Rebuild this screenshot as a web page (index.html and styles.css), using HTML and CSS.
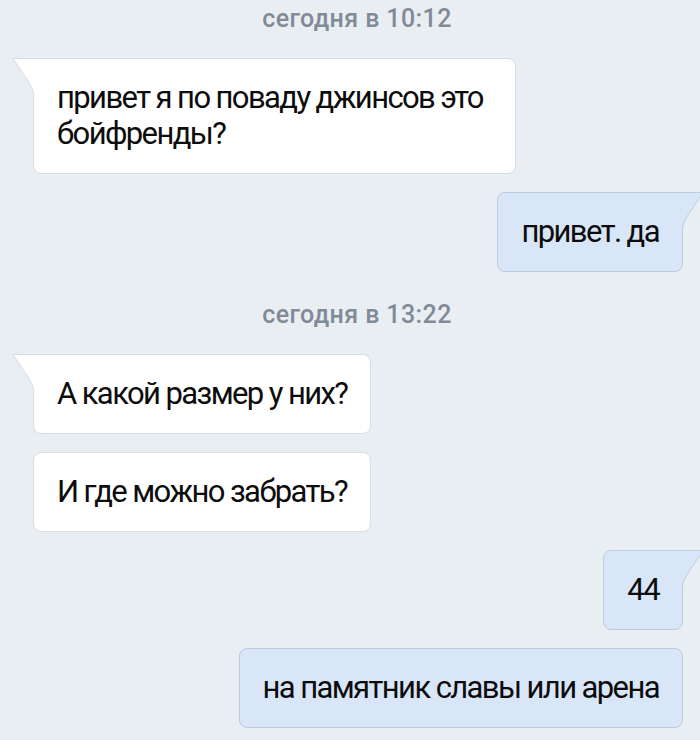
FILE: index.html
```html
<!DOCTYPE html>
<html lang="ru">
<head>
    <meta charset="UTF-8">
    <meta name="viewport" content="width=device-width, initial-scale=1.0">
    <title>Сообщения</title>
    <link rel="stylesheet" href="styles.css">
</head>
<body>
    <div class="chat">
        <div class="date first">сегодня в 10:12</div>

        <div class="row in">
            <div class="msg has-tail">
                <svg class="tail" viewBox="0 0 22 36" aria-hidden="true">
                    <path class="tail-fill" d="M22 0 H1 L16 23 Q21 30 22 36 Z"/>
                    <path class="tail-edge" d="M22 0.5 H1 L16 23 Q21 30 21.5 36"/>
                </svg>
                привет я по поваду джинсов это бойфренды?
            </div>
        </div>

        <div class="row out">
            <div class="msg has-tail">
                <svg class="tail" viewBox="0 0 22 36" aria-hidden="true">
                    <path class="tail-fill" d="M22 0 H1 L16 23 Q21 30 22 36 Z"/>
                    <path class="tail-edge" d="M22 0.5 H1 L16 23 Q21 30 21.5 36"/>
                </svg>
                привет. да
            </div>
        </div>

        <div class="date">сегодня в 13:22</div>

        <div class="row in">
            <div class="group">
                <div class="msg has-tail">
                    <svg class="tail" viewBox="0 0 22 36" aria-hidden="true">
                        <path class="tail-fill" d="M22 0 H1 L16 23 Q21 30 22 36 Z"/>
                        <path class="tail-edge" d="M22 0.5 H1 L16 23 Q21 30 21.5 36"/>
                    </svg>
                    А какой размер у них?
                </div>
                <div class="msg">И где можно забрать?</div>
            </div>
        </div>

        <div class="row out">
            <div class="msg has-tail">
                <svg class="tail" viewBox="0 0 22 36" aria-hidden="true">
                    <path class="tail-fill" d="M22 0 H1 L16 23 Q21 30 22 36 Z"/>
                    <path class="tail-edge" d="M22 0.5 H1 L16 23 Q21 30 21.5 36"/>
                </svg>
                44
            </div>
        </div>

        <div class="row out">
            <div class="msg">на памятник славы или арена</div>
        </div>
    </div>
</body>
</html>
```

FILE: styles.css
```css
body {
    margin: 0;
    background-color: #e9eef3;
    font-family: Roboto, "Noto Sans", sans-serif;
}

.chat {
    display: flex;
    flex-direction: column;
}

.date {
    text-align: center;
    padding-left: 14px;
    font-size: 25px;
    font-weight: 500;
    line-height: 36px;
    letter-spacing: 0.4px;
    color: #818b97;
    margin: 7px 0 21px;
}

.date.first {
    margin-top: 1px;
}

.row {
    display: flex;
    margin-bottom: 18px;
}

.row.in {
    justify-content: flex-start;
    padding-left: 33px;
}

.row.out {
    justify-content: flex-end;
    padding-right: 17px;
}

.group {
    display: inline-flex;
    flex-direction: column;
    gap: 18px;
}

.msg {
    position: relative;
    max-width: 435px;
    padding: 21px 23px;
    border: 1px solid #d7dde4;
    border-radius: 8px;
    background-color: #fff;
    font-size: 31px;
    line-height: 36px;
    letter-spacing: -1.6px;
    color: #0c0c0c;
}

.out .msg {
    background-color: #d9e6f7;
    border-color: #bccbdd;
}

.in .msg.has-tail {
    border-top-left-radius: 0;
}

.out .msg.has-tail {
    border-top-right-radius: 0;
}

.tail {
    position: absolute;
    top: -1px;
    width: 22px;
    height: 36px;
}

.in .tail {
    left: -22px;
}

.out .tail {
    right: -22px;
    transform: scaleX(-1);
}

.tail-fill {
    fill: #fff;
}

.tail-edge {
    fill: none;
    stroke: #d7dde4;
    stroke-width: 1;
}

.out .tail-fill {
    fill: #d9e6f7;
}

.out .tail-edge {
    stroke: #bccbdd;
}
```
